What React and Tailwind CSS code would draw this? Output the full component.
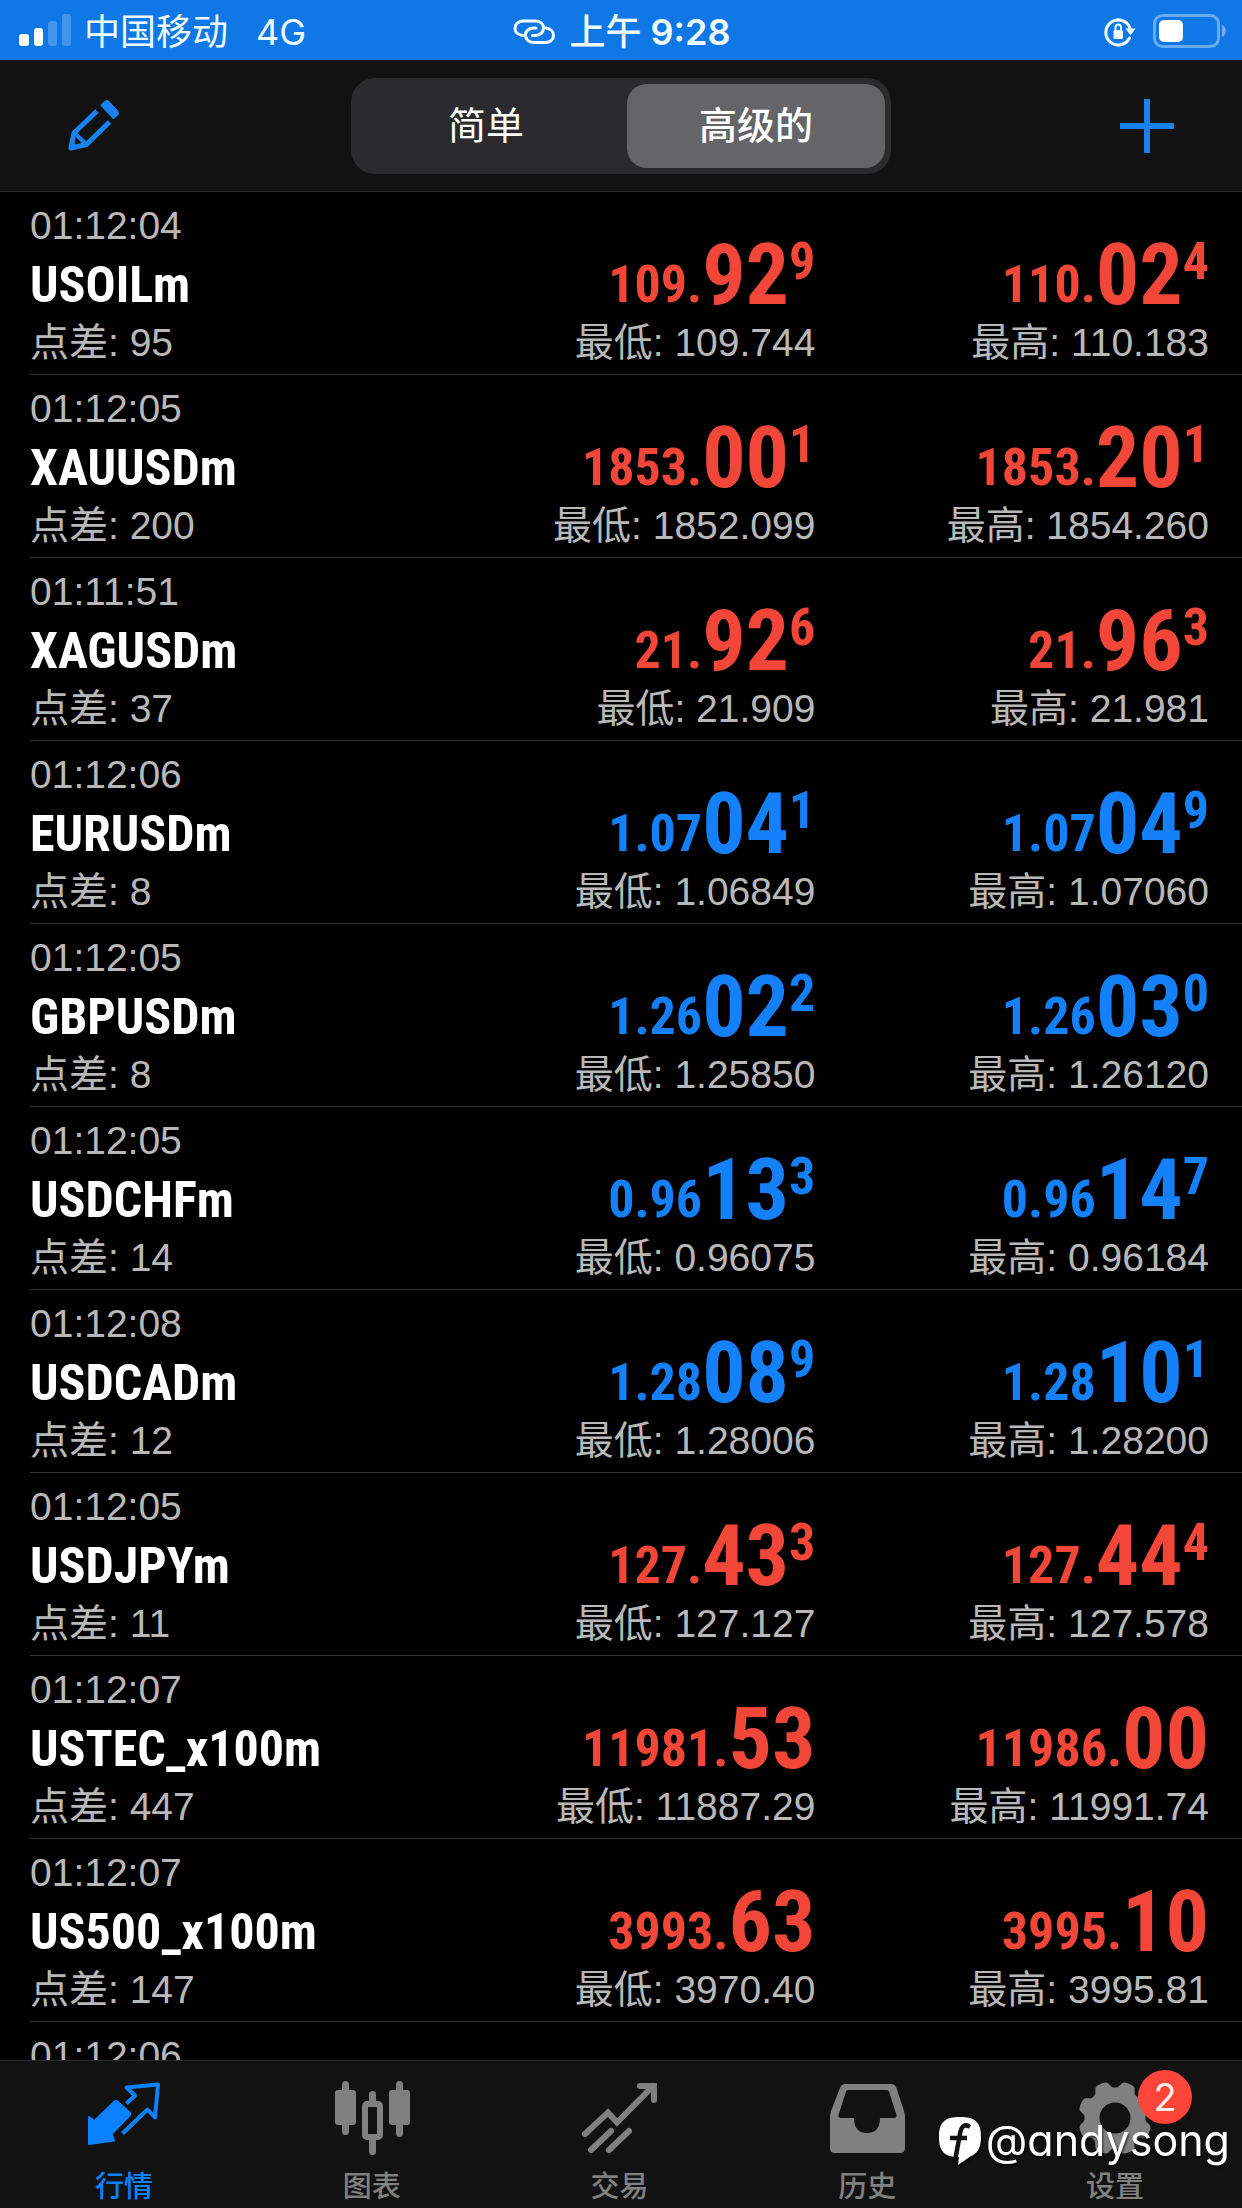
const quotes = [
  { time: "01:12:04", symbol: "USOILm", spread: 95, up: false, bid: ["109.", "92", "9"], ask: ["110.", "02", "4"], low: "109.744", high: "110.183" },
  { time: "01:12:05", symbol: "XAUUSDm", spread: 200, up: false, bid: ["1853.", "00", "1"], ask: ["1853.", "20", "1"], low: "1852.099", high: "1854.260" },
  { time: "01:11:51", symbol: "XAGUSDm", spread: 37, up: false, bid: ["21.", "92", "6"], ask: ["21.", "96", "3"], low: "21.909", high: "21.981" },
  { time: "01:12:06", symbol: "EURUSDm", spread: 8, up: true, bid: ["1.07", "04", "1"], ask: ["1.07", "04", "9"], low: "1.06849", high: "1.07060" },
  { time: "01:12:05", symbol: "GBPUSDm", spread: 8, up: true, bid: ["1.26", "02", "2"], ask: ["1.26", "03", "0"], low: "1.25850", high: "1.26120" },
  { time: "01:12:05", symbol: "USDCHFm", spread: 14, up: true, bid: ["0.96", "13", "3"], ask: ["0.96", "14", "7"], low: "0.96075", high: "0.96184" },
  { time: "01:12:08", symbol: "USDCADm", spread: 12, up: true, bid: ["1.28", "08", "9"], ask: ["1.28", "10", "1"], low: "1.28006", high: "1.28200" },
  { time: "01:12:05", symbol: "USDJPYm", spread: 11, up: false, bid: ["127.", "43", "3"], ask: ["127.", "44", "4"], low: "127.127", high: "127.578" },
  { time: "01:12:07", symbol: "USTEC_x100m", spread: 447, up: false, bid: ["11981.", "53", ""], ask: ["11986.", "00", ""], low: "11887.29", high: "11991.74" },
  { time: "01:12:07", symbol: "US500_x100m", spread: 147, up: false, bid: ["3993.", "63", ""], ask: ["3995.", "10", ""], low: "3970.40", high: "3995.81" },
];

const condensed = "font-['Roboto_Condensed','Liberation_Sans',sans-serif] font-bold";

function StatusBar() {
  return (
    <div className="grid h-[60px] shrink-0 grid-cols-3 items-center bg-[#0f78e6] px-[19px] pt-1 font-['Inter','Noto_Sans_CJK_SC',sans-serif] text-[36px] leading-[56px] text-[#f0fbff]">
      <div className="flex items-center whitespace-nowrap">
        <svg width="53" height="36" viewBox="0 0 53 36" fill="white" aria-hidden="true">
          <rect x="0" y="20" width="10" height="12" rx="3" />
          <rect x="15" y="14" width="9" height="18" rx="3" />
          <rect x="29" y="7" width="9" height="25" rx="3" opacity="0.22" />
          <rect x="43" y="0" width="9" height="32" rx="3" opacity="0.22" />
        </svg>
        <span className="ml-3">中国移动</span>
        <span className="ml-7">4G</span>
      </div>
      <div className="flex items-center justify-center gap-3 whitespace-nowrap">
        <svg width="46" height="30" viewBox="0 0 46 30" fill="none" stroke="currentColor" strokeWidth="3" strokeLinecap="round" aria-hidden="true">
          <path d="M12 18.5C7 18 4 15 4 11.5C4 7 7.500 4 12 4H24.500C29.500 4 32.500 7 32.500 11C32.500 15.500 29 18.500 24.500 18.500H21.500" />
          <path d="M25 11H22.500C18 11 14.500 14 14.500 18C14.500 22.500 18 25.500 22.500 25.500H34.500C39.500 25.500 42.500 22 42.500 18.500C42.500 14.500 39.500 11.500 35 11" />
        </svg>
        <span className="font-semibold">
          <span className="font-medium">上午</span> 9:28
        </span>
      </div>
      <div className="flex items-center justify-end gap-4">
        <svg width="34" height="34" viewBox="0 0 34 34" fill="none" aria-hidden="true">
          <path d="M27 13A12.500 12.500 0 1 0 26.500 23" stroke="currentColor" strokeWidth="3" strokeLinecap="round" />
          <path d="M22.500 13.500H32.500L27.500 20.500Z" fill="currentColor" />
          <rect x="10.500" y="15" width="9.500" height="9" rx="1.500" fill="currentColor" />
          <path d="M12.500 15.500V12.500A2.700 3 0 0 1 18 12.500V15.500" stroke="currentColor" strokeWidth="2" />
        </svg>
        <svg width="74" height="36" viewBox="0 0 74 36" fill="none" aria-hidden="true" className="-mr-1">
          <rect x="1.500" y="1.500" width="64" height="31" rx="8" stroke="white" strokeOpacity="0.38" strokeWidth="3" />
          <rect x="6" y="6" width="24" height="22" rx="5" fill="white" />
          <path d="M69 11C74 13 74 21 69 23Z" fill="white" fillOpacity="0.4" />
        </svg>
      </div>
    </div>
  );
}

function Header() {
  return (
    <header className="flex h-[132px] shrink-0 items-center justify-between border-b border-[#2a2a2a] bg-[#121212] px-[67px] font-['Inter','Noto_Sans_CJK_SC',sans-serif]">
      <button type="button" aria-label="编辑" className="text-[#1a82f0]">
        <svg width="56" height="56" viewBox="0 0 56 56" fill="none" stroke="currentColor" strokeWidth="5" strokeLinejoin="round">
          <path d="M34.500 7L38.500 3.500Q40 2.500 41.500 4L50.500 13.500Q51.500 15 50.500 16.500L46.500 20Z" fill="currentColor" strokeWidth="2" />
          <path d="M30 13L7 35L4 50L19.500 46.500L42.500 24" />
          <path d="M8 35.500L19.500 46.500" strokeWidth="4" />
          <path d="M3.500 42L11.500 50L3 51.500Z" fill="currentColor" strokeWidth="1" />
        </svg>
      </button>
      <div className="flex h-24 w-[540px] rounded-3xl bg-[#2b2b2d] p-[6px] text-[38px] text-white">
        <button type="button" aria-pressed="false" className="flex-1 rounded-[20px] pr-3">简单</button>
        <button type="button" aria-pressed="true" className="w-[258px] rounded-[20px] bg-[#656567] font-medium">高级的</button>
      </div>
      <button type="button" aria-label="添加" className="text-[#1a82f0]">
        <svg width="56" height="56" viewBox="0 0 56 56" fill="none" stroke="currentColor" strokeWidth="6">
          <path d="M28 1V55M1 28H55" />
        </svg>
      </button>
    </header>
  );
}

function Price({ parts, up, label, value }) {
  return (
    <>
      <div className={`${condensed} text-[86px] leading-[90px] whitespace-nowrap ${up ? "text-[#1480fa]" : "text-[#f24738]"}`}>
        <span className="align-[2px] text-[52px] leading-none">{parts[0]}</span>
        {parts[1]}
        {parts[2] && <span className="align-[25px] text-[52px] leading-none">{parts[2]}</span>}
      </div>
      <div className="text-[39px] leading-[46px] whitespace-nowrap">{label}: {value}</div>
    </>
  );
}

function Quote({ q }) {
  return (
    <tr>
      <td className="h-[183px] border-b border-[#333] pt-[10px] align-top">
        <div className="text-[39px] leading-[48px]">{q.time}</div>
        <div className={`${condensed} text-[50px] leading-[70px] text-white`}>{q.symbol}</div>
        <div className="text-[39px] leading-[46px]">点差: {q.spread}</div>
      </td>
      <td className="border-b border-[#333] pt-[38px] text-right align-top">
        <Price parts={q.bid} up={q.up} label="最低" value={q.low} />
      </td>
      <td className="border-b border-[#333] pt-[38px] pr-[33px] text-right align-top">
        <Price parts={q.ask} up={q.up} label="最高" value={q.high} />
      </td>
    </tr>
  );
}

const gearPoints = Array.from({ length: 160 }, (_, i) => {
  const a = (i / 160) * Math.PI * 2;
  const wave = Math.cos(8 * (a - Math.PI / 8));
  const r = 33.5 + 3.5 * Math.tanh(2 * wave + 0.6);
  return `${(39 + r * Math.cos(a)).toFixed(2)} ${(39 + r * Math.sin(a)).toFixed(2)}`;
}).join("L");

const icons = {
  quotes: (
    <>
      <path d="M4 38L9.500 42L29 23Q31 21 33 23L44.500 33.500Q46 35 44.500 36.500L26.500 55L29 61.500L4 65Z" fill="currentColor" stroke="currentColor" strokeWidth="2" strokeLinejoin="round" />
      <path d="M41.500 24.500L50 16.500L41.500 8.500L73 5.500L70 38.500L62.500 30.500L37.500 54.500" fill="none" stroke="currentColor" strokeWidth="4" strokeLinejoin="round" />
    </>
  ),
  chart: (
    <>
      <g fill="currentColor">
        <rect x="2" y="11" width="21" height="35" rx="3" />
        <rect x="9" y="2" width="7" height="54" rx="3.500" />
        <rect x="56" y="11" width="21" height="35" rx="3" />
        <rect x="63" y="2" width="7" height="56" rx="3.500" />
        <rect x="36" y="12" width="7" height="16" rx="3.500" />
        <rect x="36" y="58" width="7" height="18" rx="3.500" />
      </g>
      <rect x="32" y="25" width="15" height="33" rx="2" fill="none" stroke="currentColor" strokeWidth="6" />
    </>
  ),
  trade: (
    <path d="M5 55L28 33.500L37 43.500L73 7M60 7H74V21M11 71L31 52M29 71L49 52" fill="none" stroke="currentColor" strokeWidth="6" strokeLinecap="round" />
  ),
  history: (
    <path
      fill="currentColor"
      fillRule="evenodd"
      d="M17 5H63Q67 5 68.500 9L76 32Q77 35 77 38V69Q77 74 72 74H7Q2 74 2 69V38Q2 35 3 32L12 9Q13.500 5 17 5ZM20 11Q18.500 11 18 12.500L10.500 36Q10 39 13 39H26Q26 54 39 54T52 39H66Q69 39 68.500 36L61 12.500Q60.500 11 59 11Z"
    />
  ),
  settings: <path fill="currentColor" fillRule="evenodd" d={`M${gearPoints}ZM39 23.500A15.500 15.500 0 1 0 39 54.500A15.500 15.500 0 1 0 39 23.500Z`} />,
};

const tabs = [
  { key: "quotes", label: "行情", active: true },
  { key: "chart", label: "图表" },
  { key: "trade", label: "交易" },
  { key: "history", label: "历史" },
  { key: "settings", label: "设置", badge: 2 },
];

function TabBar() {
  return (
    <nav className="relative grid h-[148px] shrink-0 grid-cols-5 border-t border-[#2a2a2a] bg-[#121212] pr-[3px] font-['Inter','Noto_Sans_CJK_SC',sans-serif]">
      {tabs.map((t) => (
        <button key={t.key} type="button" className={`flex flex-col items-center pt-[18px] ${t.active ? "text-[#0a82ff]" : "text-[#808080]"}`}>
          <span className="relative">
            <svg width="78" height="78" viewBox="0 0 78 78" aria-hidden="true">
              {icons[t.key]}
            </svg>
            {t.badge && (
              <span className="absolute -top-[9px] left-[62px] flex size-[54px] items-center justify-center rounded-full bg-[#ff453a] text-[38px] leading-none text-[#fff0e6]">
                {t.badge}
              </span>
            )}
          </span>
          <span className="mt-[10px] text-[29px] leading-10 font-medium">{t.label}</span>
        </button>
      ))}
      <div className="absolute top-[51px] right-[12px] flex items-center gap-1 text-white drop-shadow-[1px_2px_1px_rgba(0,0,0,0.6)]">
        <svg width="44" height="52" viewBox="0 0 44 52" aria-hidden="true">
          <path d="M22 3C37 3 43 8 43 23C43 34 39 40 33 42L20 51L21 43C7 43 1 38 1 23C1 8 7 3 22 3Z" fill="white" />
          <path d="M32 13C26 9 23 13 22 20L17.500 44M12 24H29" fill="none" stroke="#121212" strokeWidth="4.500" />
        </svg>
        <span className="text-[43px] leading-[56px] [font-feature-settings:'cv11']">@andysong</span>
      </div>
    </nav>
  );
}

export default function App() {
  return (
    <div className="flex h-screen flex-col overflow-hidden bg-black">
      <StatusBar />
      <Header />
      <main className="min-h-0 flex-1 overflow-hidden pl-[30px] font-['Liberation_Sans','Noto_Sans_CJK_SC',sans-serif] text-[#b8b8b8]">
        <table className="w-full table-fixed border-separate border-spacing-0">
          <colgroup>
            <col className="w-[32.4%]" />
            <col className="w-[32.4%]" />
            <col />
          </colgroup>
          <tbody>
            {quotes.map((q) => (
              <Quote key={q.symbol} q={q} />
            ))}
            <tr>
              <td colSpan={3} className="pt-[10px] text-[39px] leading-[48px]">01:12:06</td>
            </tr>
          </tbody>
        </table>
      </main>
      <TabBar />
    </div>
  );
}
